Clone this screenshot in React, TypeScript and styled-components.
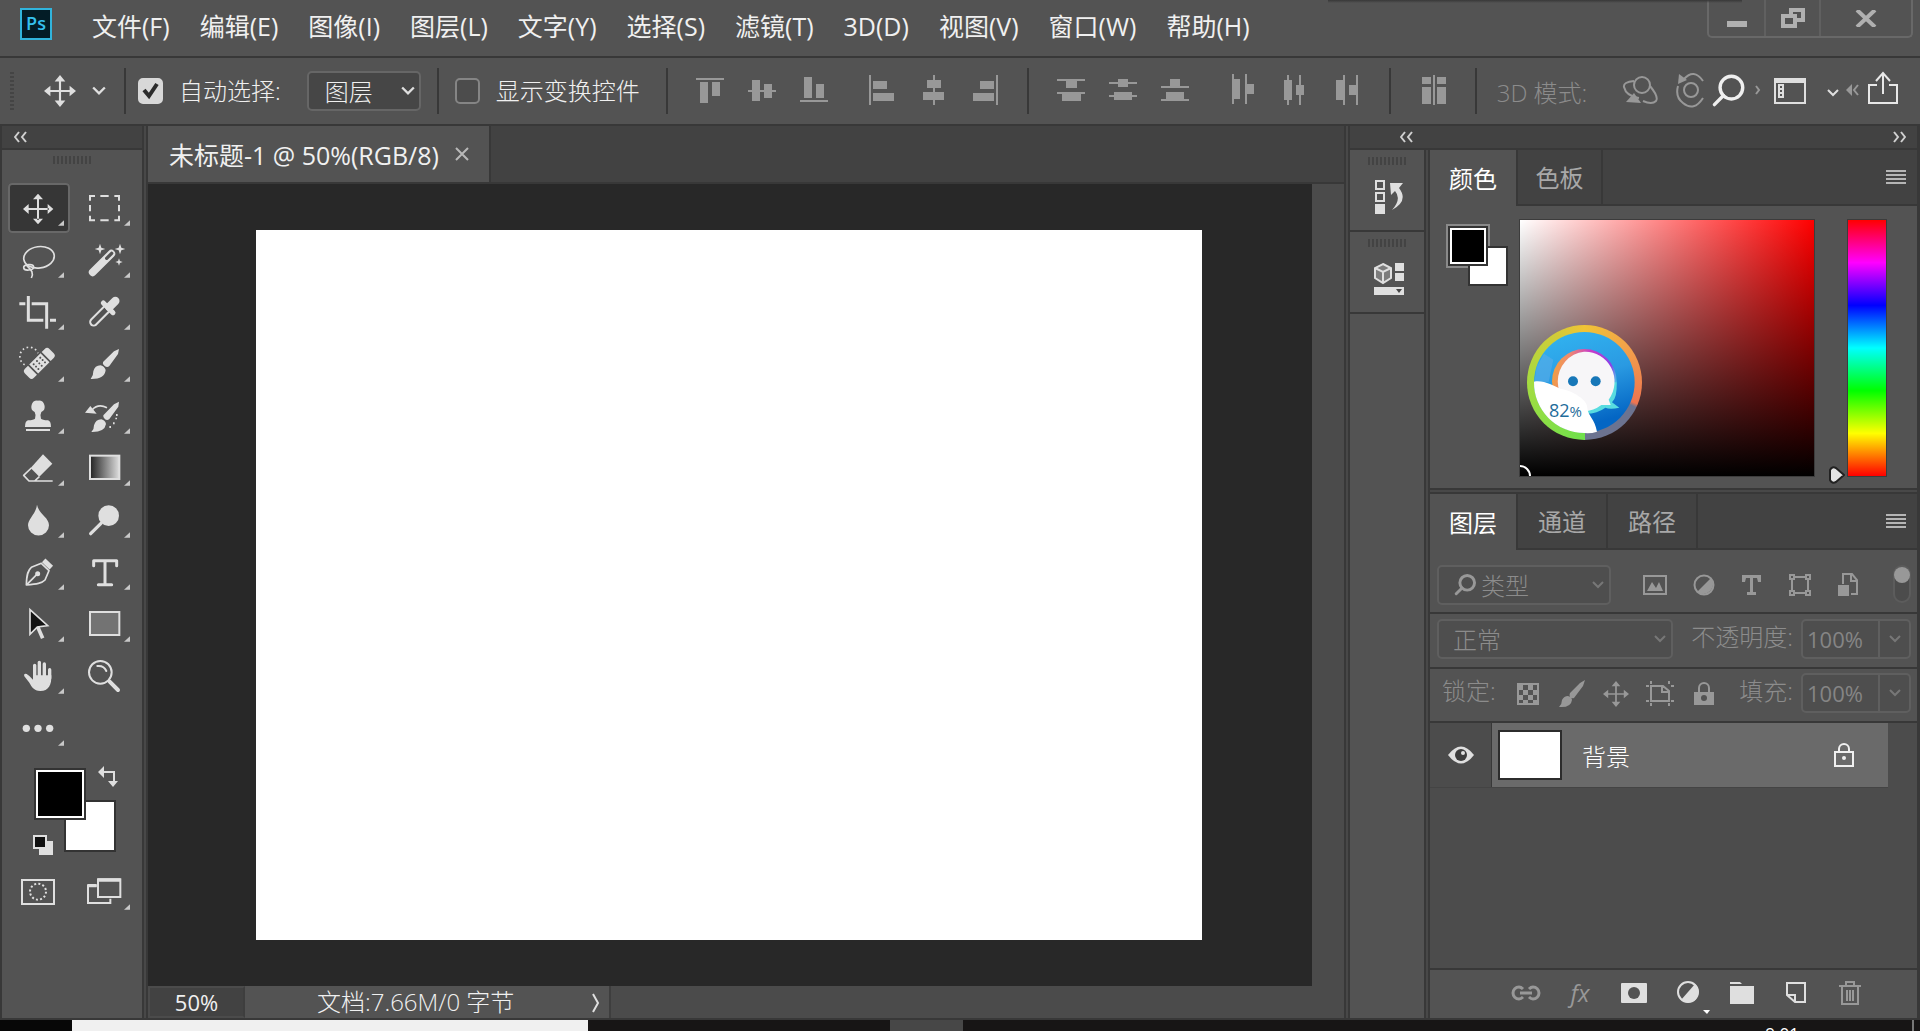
import React from "react";
import styled, { createGlobalStyle } from "styled-components";

const c = {
  panel: "#535353",
  dark: "#424242",
  line: "#383838",
  seam: "#484848",
  canvas: "#282828",
  field: "#464646",
  icon: "#dfdfdf",
  dim: "#989898",
  faint: "#8c8c8c",
  text: "#f0f0f0",
};

const Global = createGlobalStyle`
  *, *::before, *::after { box-sizing: border-box; }
  body { margin: 0; background: ${c.line}; }
  body, button, input, select {
    font-family: "Open Sans", "Noto Sans CJK SC", sans-serif;
    color: ${c.text};
  }
  svg { display: block; flex: none; }
`;

const App = styled.div`
  display: flex;
  flex-direction: column;
  height: 100vh;
  overflow: hidden;
  background: ${c.panel};
`;

const PlainButton = styled.button`
  display: flex;
  align-items: center;
  justify-content: center;
  padding: 0;
  border: 0;
  background: none;
`;

/* ---------- menu bar ---------- */

const MenuBar = styled.header`
  position: relative;
  display: flex;
  flex: none;
  align-items: flex-start;
  height: 58px;
  padding: 0 7px 0 20px;
  border-bottom: 2px solid ${c.line};
`;

const EdgeShadow = styled.div`
  position: absolute;
  top: 0;
  right: 178px;
  width: 414px;
  height: 3px;
  background: linear-gradient(#383838, transparent);
`;

const Logo = styled.div`
  width: 32px;
  height: 32px;
  margin: 8px 25px 0 0;
  border: 2px solid #31b4dc;
  background: #031c26;
  color: #35c0ee;
  font-size: 18px;
  font-weight: 600;
  line-height: 27px;
  text-align: center;
`;

const Menus = styled.nav`
  display: flex;
  flex: 1;
`;

const MenuItem = styled.button`
  padding: 0 15px;
  border: 0;
  background: none;
  font-size: 25px;
  line-height: 52px;
  white-space: nowrap;
`;

const WindowControls = styled.div`
  display: flex;
  height: 38px;
  border: 2px solid #686868;
  border-top: 0;
  border-radius: 0 0 5px 5px;
`;

const WindowButton = styled(PlainButton)<{ $wide?: boolean }>`
  width: ${(p) => (p.$wide ? 92 : 55)}px;
  & + & {
    border-left: 2px solid #606060;
  }
`;

/* ---------- options bar ---------- */

const OptionsBar = styled.section`
  display: flex;
  flex: none;
  align-items: center;
  height: 68px;
  padding: 0 17px 0 10px;
  border-bottom: 2px solid ${c.line};
`;

const SideGrip = styled.div`
  width: 4px;
  height: 38px;
  background: repeating-linear-gradient(#444 0 2px, transparent 2px 4px);
`;

const ActiveTool = styled(PlainButton)`
  margin-left: 30px;
  gap: 16px;
`;

const Separator = styled.div<{ $tight?: boolean }>`
  flex: none;
  width: 2px;
  height: 46px;
  margin: 0 ${(p) => (p.$tight ? 12 : 16)}px 0 ${(p) => (p.$tight ? 18 : 16)}px;
  background: ${c.line};
`;

const CheckLabel = styled.label`
  display: flex;
  flex: none;
  align-items: center;
  gap: 16px;
  position: relative;
  font-size: 24px;
  font-weight: 300;
  line-height: 36px;
  white-space: nowrap;
`;

const CheckBox = styled.input`
  appearance: none;
  width: 25px;
  height: 26px;
  margin: 0;
  border: 2px solid #858585;
  border-radius: 5px;
  background: #4c4c4c;
  &:checked {
    border-color: #d8d8d8;
    background: #d8d8d8;
  }
`;

const CheckMark = styled.svg`
  position: absolute;
  left: 4px;
  pointer-events: none;
`;

const SelectBox = styled.div<{ $width: number; $dim?: boolean }>`
  display: flex;
  align-items: center;
  position: relative;
  flex: none;
  width: ${(p) => p.$width}px;
  color: ${(p) => (p.$dim ? c.faint : c.text)};
`;

const Select = styled.select<{ $indent: number; $dim?: boolean }>`
  appearance: none;
  width: 100%;
  height: 40px;
  padding: 0 32px 0 ${(p) => p.$indent}px;
  border: 2px solid ${(p) => (p.$dim ? "#5f5f5f" : "#666")};
  border-radius: 5px;
  background: ${(p) => (p.$dim ? "#4e4e4e" : c.field)};
  color: inherit;
  font-size: 24px;
  font-weight: 300;
  opacity: 1;
`;

const Overlay = styled.span<{ $left?: number; $right?: number }>`
  position: absolute;
  ${(p) => (p.$left !== undefined ? `left: ${p.$left}px;` : "")}
  ${(p) => (p.$right !== undefined ? `right: ${p.$right}px;` : "")}
  pointer-events: none;
`;

const Spacer = styled.div<{ $w: number }>`
  flex: 0 1 ${(p) => p.$w}px;
`;

const IconGroup = styled.div`
  display: flex;
  flex: none;
`;

const AlignButton = styled(PlainButton)`
  width: 52px;
  color: ${c.dim};
`;

const ModeLabel = styled.span`
  margin: 0 34px 0 4px;
  color: ${c.faint};
  font-size: 24px;
  font-weight: 300;
  white-space: nowrap;
`;

const RightTools = styled.div`
  display: flex;
  gap: 4px;
  margin-left: auto;
`;

const ModeTools = styled.div`
  display: flex;
  gap: 16px;
`;

/* ---------- workspace ---------- */

const Workspace = styled.main`
  display: flex;
  flex: 1;
  min-height: 0;
  border-bottom: 2px solid ${c.line};
  background: ${c.seam};
`;

const ToolPanel = styled.aside`
  display: flex;
  flex-direction: column;
  flex: none;
  width: 144px;
  margin-right: 2px;
  border: solid ${c.line};
  border-width: 0 2px;
  background: ${c.panel};
`;

const DockHeader = styled.div`
  display: flex;
  flex: none;
  align-items: center;
  justify-content: space-between;
  height: 24px;
  padding: 0 11px 0 50px;
  border-bottom: 2px solid ${c.line};
  background: ${c.dark};
`;

const ToolHeader = styled(DockHeader)`
  padding: 0 12px;
`;

const Grip = styled.div`
  flex: none;
  width: 38px;
  height: 8px;
  margin: 6px auto 0;
  background: repeating-linear-gradient(90deg, #434343 0 2px, transparent 2px 4px);
`;

const ToolGrid = styled.div`
  display: grid;
  grid-template-columns: 62px 62px;
  grid-auto-rows: 50px;
  gap: 2px 4px;
  padding-left: 6px;
`;

const ToolList = styled(ToolGrid)`
  margin-top: 19px;
`;

const ToolButton = styled(PlainButton)<{ $active?: boolean }>`
  overflow: hidden;
  border-radius: 4px;
  background: ${(p) => (p.$active ? "#363636" : "transparent")};
  box-shadow: ${(p) => (p.$active ? "inset 0 0 0 2px #686868" : "none")};
`;

const SwatchArea = styled.div`
  position: relative;
  flex: none;
  height: 114px;
`;

const Chip = styled.button<{ $x: number; $y: number; $size: number; $front?: boolean }>`
  position: absolute;
  left: ${(p) => p.$x}px;
  top: ${(p) => p.$y}px;
  width: ${(p) => p.$size}px;
  height: ${(p) => p.$size}px;
  padding: 0;
  border: 2px solid #333;
  background: ${(p) => (p.$front ? "#000" : "#fff")};
  box-shadow: ${(p) => (p.$front ? "inset 0 0 0 2px #fff" : "none")};
`;

const ChipTool = styled(PlainButton)<{ $x: number; $y: number }>`
  position: absolute;
  left: ${(p) => p.$x}px;
  top: ${(p) => p.$y}px;
`;

const Doc = styled.section`
  display: flex;
  flex: 1;
  flex-direction: column;
  min-width: 0;
  border: solid ${c.line};
  border-width: 0 2px;
`;

const TabStrip = styled.div`
  display: flex;
  flex: none;
  height: 58px;
  border-bottom: 2px solid ${c.line};
  background: ${c.dark};
`;

const DocTab = styled.div`
  display: flex;
  align-items: center;
  gap: 16px;
  padding: 0 20px 0 21px;
  border-right: 2px solid ${c.line};
  background: ${c.panel};
  font-size: 25px;
  white-space: nowrap;
`;

const Stage = styled.div`
  display: flex;
  flex: 1;
  min-height: 0;
`;

const Pasteboard = styled.div`
  flex: 1;
  padding: 46px 110px 46px 108px;
  background: ${c.canvas};
`;

const Artboard = styled.div`
  height: 100%;
  background: #fff;
`;

const ScrollTrack = styled.div`
  width: 32px;
  background: #4b4b4b;
`;

const StatusBar = styled.footer`
  display: flex;
  flex: none;
  height: 32px;
  background: #4b4b4b;
`;

const ZoomField = styled.input`
  width: 97px;
  padding: 0;
  border: 2px solid #4b4b4b;
  border-right-color: #3e3e3e;
  background: ${c.dark};
  font-size: 22px;
  text-align: center;
`;

const DocInfo = styled.div`
  display: flex;
  align-items: center;
  justify-content: space-between;
  width: 366px;
  padding: 0 9px 0 72px;
  border-right: 2px solid #3e3e3e;
  background: ${c.panel};
  font-size: 24px;
  font-weight: 300;
  line-height: 30px;
  white-space: nowrap;
`;

/* ---------- dock ---------- */

const Dock = styled.aside`
  display: flex;
  flex: none;
  flex-direction: column;
  width: 572px;
  margin-left: 2px;
  border: solid ${c.line};
  border-width: 0 3px 0 2px;
`;

const DockBody = styled.div`
  display: flex;
  flex: 1;
  min-height: 0;
`;

const IconColumn = styled.div`
  width: 76px;
  border-right: 2px solid ${c.line};
  background: ${c.panel};
`;

const IconPanel = styled.div`
  height: 82px;
  padding-top: 1px;
  border-bottom: 2px solid ${c.line};
`;

const CollapsedButton = styled(PlainButton)`
  width: 100%;
  height: 36px;
  margin-top: 14px;
  padding-left: 4px;
`;

const Panels = styled.div`
  display: flex;
  flex: 1;
  flex-direction: column;
  gap: 2px;
  margin-left: 2px;
  border-left: 2px solid ${c.line};
`;

const Panel = styled.section<{ $fill?: boolean }>`
  display: flex;
  flex-direction: column;
  flex: ${(p) => (p.$fill ? "1" : "none")};
  border-bottom: ${(p) => (p.$fill ? "0" : `2px solid ${c.line}`)};
  border-top: ${(p) => (p.$fill ? `2px solid ${c.line}` : "0")};
  background: ${c.panel};
`;

const PanelTabs = styled.div`
  display: flex;
  flex: none;
  height: 56px;
`;

const PanelTab = styled.button<{ $active?: boolean; $width: number }>`
  width: ${(p) => p.$width}px;
  padding: 0 0 2px;
  border: solid ${c.line};
  border-width: ${(p) => (p.$active ? "0 2px 0 0" : "0 2px 2px 0")};
  background: ${(p) => (p.$active ? c.panel : c.dark)};
  color: ${(p) => (p.$active ? "#fff" : "#a8a8a8")};
  font-size: 24px;
`;

const TabFill = styled.div`
  display: flex;
  flex: 1;
  align-items: center;
  justify-content: flex-end;
  padding-right: 11px;
  border-bottom: 2px solid ${c.line};
  background: ${c.dark};
`;

const ColorBody = styled.div`
  display: flex;
  padding: 14px 31px 12px 16px;
`;

const ColorChips = styled.div`
  position: relative;
  width: 74px;
`;

const FrontFrame = styled.div`
  position: absolute;
  left: 0;
  top: 4px;
  width: 44px;
  height: 44px;
  background: #8a8a8a;
`;

const ColorField = styled.div`
  position: relative;
  flex: 1;
  height: 256px;
  overflow: hidden;
  outline: 1px solid #3c3c3c;
  background: linear-gradient(transparent, #000), linear-gradient(90deg, #fff, #f00);
`;

const Picker = styled.span`
  position: absolute;
  left: -11px;
  bottom: -11px;
  width: 22px;
  height: 22px;
  border: 2px solid #fff;
  border-radius: 50%;
`;

const Orb = styled.div`
  position: absolute;
  left: 7px;
  top: 105px;
  width: 115px;
  height: 115px;
  border-radius: 50%;
  background: conic-gradient(#f0c436, #f2a24a 50deg, #ee7450 112deg, #6c7390 116deg, #6c7390 180deg, #6fe04c 180deg, #a5dc40 270deg, #d2cb38 330deg, #f0c436);
`;

const OrbText = styled.span`
  position: absolute;
  left: 22px;
  top: 73px;
  color: #1f6d9b;
  font-size: 18px;
  line-height: 24px;
  small {
    font-size: 15px;
  }
`;

const HueBar = styled.div`
  position: relative;
  width: 38px;
  margin-left: 34px;
  outline: 1px solid #3c3c3c;
  background: linear-gradient(#f00, #f0f, #00f, #0ff, #0f0, #ff0, #f00);
`;

const HueHandle = styled.svg`
  position: absolute;
  left: -20px;
  bottom: -8px;
`;

const LayerRow = styled.div<{ $top: number; $h: number }>`
  display: flex;
  flex: none;
  align-items: flex-start;
  height: ${(p) => p.$h}px;
  padding: ${(p) => p.$top}px 6px 0 7px;
  border-bottom: 2px solid ${c.line};
`;

const FilterIcons = styled.div`
  display: flex;
  flex: 1;
  align-items: center;
  justify-content: space-between;
  height: 40px;
  padding: 0 35px 0 32px;
  color: ${c.dim};
`;

const Toggle = styled.button`
  width: 18px;
  height: 38px;
  padding: 0;
  border: 2px solid #5c5c5c;
  border-radius: 9px;
  background: #4c4c4c;
`;

const Knob = styled.span`
  display: block;
  width: 16px;
  height: 16px;
  margin: -17px 0 0 -1px;
  border-radius: 50%;
  background: ${c.dim};
`;

const FieldLabel = styled.label<{ $lead?: boolean }>`
  padding: 0 ${(p) => (p.$lead ? 10 : 8)}px 0 ${(p) => (p.$lead ? 5 : 0)}px;
  color: ${c.faint};
  font-size: 24px;
  font-weight: 300;
  line-height: 36px;
  white-space: nowrap;
`;

const Push = styled.div`
  display: flex;
  margin-left: auto;
`;

const ValueField = styled.div`
  display: flex;
  width: 110px;
  height: 40px;
  border: 2px solid #5f5f5f;
  border-radius: 5px;
  background: #4e4e4e;
`;

const ValueInput = styled.input`
  width: 77px;
  padding: 0 0 0 4px;
  border: 0;
  border-right: 2px solid #5f5f5f;
  background: none;
  color: #858585;
  font-size: 22px;
`;

const ValueDrop = styled(PlainButton)`
  flex: 1;
`;

const LockIcons = styled.div`
  display: flex;
  align-items: center;
  height: 42px;
`;

const LockButton = styled(PlainButton)`
  width: 44px;
  color: ${c.dim};
`;

const LayerList = styled.div`
  flex: 1;
  background: #4c4c4c;
`;

const Layer = styled.div`
  display: flex;
  height: 65px;
  margin-right: 29px;
  border-bottom: 1px solid #444;
`;

const EyeButton = styled(PlainButton)`
  width: 62px;
  border-right: 1px solid ${c.line};
`;

const LayerBody = styled.div`
  display: flex;
  flex: 1;
  align-items: center;
  padding: 0 33px 0 6px;
  background: #6a6a6a;
`;

const Thumb = styled.div`
  width: 64px;
  height: 50px;
  border: 2px solid #2c2c2c;
  background: #fff;
`;

const LayerName = styled.span`
  flex: 1;
  padding-left: 20px;
  color: #fff;
  font-size: 24px;
  font-weight: 300;
`;

const LayerFooter = styled.div`
  display: flex;
  flex: none;
  justify-content: flex-end;
  height: 50px;
  padding: 0 40px 2px 0;
  border-top: 2px solid ${c.line};
`;

const FooterButton = styled(PlainButton)`
  width: 54px;
`;

const FxText = styled.span`
  color: ${c.dim};
  font-size: 24px;
  font-style: italic;
  line-height: 30px;
`;

/* ---------- system taskbar ---------- */

const Taskbar = styled.footer`
  display: flex;
  flex: none;
  height: 11px;
  overflow: hidden;
  background: #171515;
`;

const TaskStart = styled.div`
  width: 72px;
  background: #070707;
`;

const TaskSearch = styled.div`
  width: 516px;
  margin-right: 302px;
  background: #f0f0f0;
`;

const TaskApp = styled.div`
  width: 73px;
  background: #474747;
`;

const Clock = styled.time`
  margin-left: auto;
  padding: 3px 113px 0 0;
  color: #fff;
  font-size: 17px;
  line-height: 22px;
`;

const DesktopEdge = styled.div`
  width: 2px;
  margin-right: 6px;
  background: #777;
`;

/* ---------- icons ---------- */

const Chevron = ({ color = c.icon, size = 12 }: { color?: string; size?: number }) => (
  <svg width={size} height={size} viewBox="0 0 12 12" fill="none" stroke={color} strokeWidth="2">
    <path d="M1 3l5 5 5-5" />
  </svg>
);

const DoubleArrow = ({ right }: { right?: boolean }) => (
  <svg width="13" height="12" viewBox="0 0 13 12" fill="none" stroke="#d0d0d0" strokeWidth="2">
    <path d={right ? "M1 1l4 5-4 5M8 1l4 5-4 5" : "M5 1L1 6l4 5M12 1L8 6l4 5"} />
  </svg>
);

const Hamburger = () => (
  <svg width="20" height="14" viewBox="0 0 20 14" fill="#b5b5b5">
    <path d="M0 0h20v2H0zM0 4h20v2H0zM0 8h20v2H0zM0 12h20v2H0z" />
  </svg>
);

const MoveIcon = ({ size = 30, color = c.icon }: { size?: number; color?: string }) => (
  <svg width={size} height={size} viewBox="0 0 30 30" fill={color}>
    <path d="M14 5h2v9h9v2h-9v9h-2v-9H5v-2h9z" />
    <path d="M15 0l5 6H10zM15 30l5-6H10zM0 15l6-5v10zM30 15l-6-5v10z" />
  </svg>
);

const alignIcons: [string, string][] = [
  ["顶对齐", "M4 7h28v2H4zM8 11h8v21H8zM20 11h8v14h-8z"],
  ["垂直居中对齐", "M4 19h28v2H4zM8 9h8v21H8zM20 13h8v14h-8z"],
  ["底对齐", "M4 29h28v2H4zM8 6h8v21H8zM20 13h8v14h-8z"],
  ["左对齐", "M6 4h2v30H6zM10 10h14v8H10zM10 22h21v8H10z"],
  ["水平居中对齐", "M18 4h2v30h-2zM12 9h14v8H12zM8 21h21v8H8z"],
  ["右对齐", "M29 4h2v30h-2zM13 10h14v8H13zM6 22h21v8H6z"],
  ["按顶分布", "M4 8h28v2H4zM13 10h11v7H13zM4 21h28v2H4zM9 23h19v7H9z"],
  ["垂直居中分布", "M4 11h28v2H4zM13 8h10v8H13zM4 24h28v2H4zM9 21h18v8H9z"],
  ["按底分布", "M13 8h10v7H13zM4 15h28v2H4zM9 21h18v7H9zM4 28h28v2H4z"],
  ["按左分布", "M7 3h2v30H7zM9 8h6v20H9zM20 3h2v30h-2zM22 13h7v10h-7z"],
  ["水平居中分布", "M10 4h2v30h-2zM7 9h8v20H7zM22 4h2v30h-2zM19 14h8v10h-8z"],
  ["按右分布", "M7 9h7v20H7zM14 4h2v30h-2zM20 14h7v10h-7zM27 4h2v30h-2z"],
  ["自动对齐图层", "M7 6h9v7H7zM7 16h9v17H7zM18 4h2v30h-2zM22 6h9v7h-9zM22 16h9v17h-9z"],
];

const Aligns = ({ from, to }: { from: number; to: number }) => (
  <IconGroup>
    {alignIcons.slice(from, to).map(([name, d]) => (
      <AlignButton key={name} aria-label={name}>
        <svg width="36" height="40" viewBox="0 0 36 40" fill="currentColor" shapeRendering="crispEdges">
          <path d={d} />
        </svg>
      </AlignButton>
    ))}
  </IconGroup>
);

const star = (x: number, y: number, r: number) =>
  `M${x} ${y - r}L${x + r / 4} ${y - r / 4}L${x + r} ${y}L${x + r / 4} ${y + r / 4}L${x} ${y + r}L${x - r / 4} ${y + r / 4}L${x - r} ${y}L${x - r / 4} ${y - r / 4}Z`;

interface Tool {
  name: string;
  top: number;
  right?: boolean;
  art: React.ReactNode;
  noMenu?: boolean;
  active?: boolean;
}

const ink = c.icon;

const tools: Tool[] = [
  {
    name: "移动工具", top: 39, active: true,
    art: (
      <path fill={ink} d="M111 85h6v29h29v6h-29v29h-6v-29H82v-6h29zM114 71l15 17H99zM114 163l15-17H99zM69 117l17-15v30zM160 117l-17-15v30z" />
    ),
  },
  {
    name: "矩形选框工具", top: 39, right: true,
    art: (
      <path fill="none" stroke={ink} strokeWidth="6" d="M270 92V78H285M301 78H326M343 78H357V92M357 105V124M357 137V151H343M326 151H301M285 151H270V137M270 124V105" />
    ),
  },
  {
    name: "套索工具", top: 195,
    art: (
      <g fill="none" stroke={ink} strokeWidth="5">
        <ellipse cx="117" cy="262" rx="46" ry="32" transform="rotate(-8 117 262)" />
        <ellipse cx="86" cy="292" rx="15" ry="8" transform="rotate(-6 86 292)" />
        <path d="M78 284C88 296 104 304 94 324" />
      </g>
    ),
  },
  {
    name: "魔棒工具", top: 195, right: true,
    art: (
      <g fill="none" strokeLinecap="round">
        <path d="M278 307L334 251" stroke={ink} strokeWidth="23" />
        <path d="M320 265L335 250" stroke={c.panel} strokeWidth="10" />
        <path fill={ink} d={star(300, 237, 16) + star(360, 237, 16) + star(357, 276, 11)} />
      </g>
    ),
  },
  {
    name: "裁剪工具", top: 351,
    art: <path fill="none" stroke={ink} strokeWidth="9" d="M58 401H76M85 378V451H130M95 401H140V476M150 451H168" />,
  },
  {
    name: "吸管工具", top: 351, right: true,
    art: (
      <g fill="none" strokeLinecap="round">
        <path d="M320 417L281 456" stroke={ink} strokeWidth="27" />
        <path d="M322 415L281 456" stroke={c.panel} strokeWidth="15" />
        <path d="M346 393L328 411" stroke={ink} strokeWidth="25" />
        <path d="M310 399L339 428" stroke={ink} strokeWidth="15" />
      </g>
    ),
  },
  {
    name: "污点修复画笔工具", top: 507,
    art: (
      <g>
        <g transform="rotate(-45 118 580)" fill={ink}>
          <path d="M76 561h13v38H76q-10 0-10-10v-18q0-10 10-10zM94 561h48v38H94zM147 561h13q10 0 10 10v18q0 10-10 10h-13z" />
          <g fill={c.panel}>
            {[104, 118, 132].map((x) => [570, 580, 590].map((y) => <circle key={`${x}${y}`} cx={x} cy={y} r="3" />))}
          </g>
        </g>
        <path d="M74 584A28 28 0 1 1 114 550" fill="none" stroke={ink} strokeWidth="5" strokeDasharray="5 8" />
      </g>
    ),
  },
  {
    name: "画笔工具", top: 507, right: true,
    art: (
      <path fill={ink} d="M357 537L354 552L328 588Q322 594 314 588Q306 582 309 576L342 544ZM302 586Q314 590 317 600Q314 628 272 627Q281 615 280 604Q284 586 302 586Z" />
    ),
  },
  {
    name: "仿制图章工具", top: 663,
    art: (
      <path fill={ink} d="M114 692a18 18 0 0 1 10 34Q119 735 123 746Q126 750 144 751Q153 753 153 771H75Q75 753 84 751Q102 750 105 746Q109 735 104 726A18 18 0 0 1 114 692ZM78 777h72v6H78z" />
    ),
  },
  {
    name: "历史记录画笔工具", top: 663, right: true,
    art: (
      <g fill={ink}>
        <path d="M357 695L355 710L328 747Q322 753 315 748Q308 742 310 736L342 703ZM304 748Q316 751 318 762Q314 787 274 786Q283 776 282 766Q287 748 304 748ZM255 728L271 708L290 731Z" />
        <path d="M276 720Q294 700 321 713" fill="none" stroke={ink} strokeWidth="5" />
        <path d="M348 732v6h5v-6zM346 743v5h5v-5zM339 757v6h5v-6zM328 768v6h5v-6z" />
      </g>
    ),
  },
  {
    name: "橡皮擦工具", top: 819,
    art: (
      <g transform="translate(0 810)">
        <path fill={ink} d="M129 43L157 71L118 110L92 84Z" />
        <path fill="none" stroke={ink} strokeWidth="5" strokeLinejoin="round" d="M94 84L71 106L87 123H158M118 110L104 123" />
      </g>
    ),
  },
  {
    name: "渐变工具", top: 819, right: true,
    art: (
      <g transform="translate(0 810)">
        <linearGradient id="ramp">
          <stop offset="0" stopColor="#222" />
          <stop offset="1" stopColor="#ddd" />
        </linearGradient>
        <rect x="270" y="47" width="88" height="70" fill="url(#ramp)" stroke={ink} strokeWidth="6" />
      </g>
    ),
  },
  {
    name: "模糊工具", top: 975,
    art: <path transform="translate(0 810)" fill={ink} d="M111 194C116 222 147 232 147 256A31 30 0 0 1 84 256C84 236 108 222 111 194Z" />,
  },
  {
    name: "减淡工具", top: 975, right: true,
    art: (
      <g transform="translate(0 810)">
        <circle cx="326" cy="227" r="31" fill={ink} />
        <path d="M303 250L272 281" stroke={ink} strokeWidth="10" strokeLinecap="round" />
      </g>
    ),
  },
  {
    name: "钢笔工具", top: 1131,
    art: (
      <g transform="translate(0 810)" fill="none" stroke={ink} strokeWidth="5" strokeLinejoin="round">
        <path d="M79 435C80 402 84 390 94 382L124 370L147 392L135 420C126 430 110 432 79 435Z" />
        <path d="M81 433L110 404" />
        <circle cx="113" cy="401" r="5" fill={ink} />
        <path d="M131 361L154 383" strokeWidth="15" />
      </g>
    ),
  },
  {
    name: "横排文字工具", top: 1131, right: true,
    art: <path transform="translate(0 810)" fill="none" stroke={ink} strokeWidth="9" strokeLinejoin="round" strokeLinecap="round" d="M281 377V362H350V377M315 362V433M295 434H335" />,
  },
  {
    name: "路径选择工具", top: 1287,
    art: (
      <g transform="translate(0 810)">
        <path d="M113 560L128 595" stroke={ink} strokeWidth="11" />
        <path d="M90 509L143 557L112 561L90 583Z" fill="#141414" stroke={ink} strokeWidth="5" />
      </g>
    ),
  },
  {
    name: "矩形工具", top: 1287, right: true,
    art: <rect x="270" y="1326" width="88" height="69" fill="#737373" stroke={ink} strokeWidth="6" />,
  },
  {
    name: "抓手工具", top: 1443,
    art: (
      <g transform="translate(0 810)" stroke={ink} strokeLinecap="round" strokeWidth="10">
        <path d="M104 676V715M118 667V715M133 672V715M149 689V715" />
        <path strokeWidth="0" fill={ink} d="M99 706H154C155 736 146 753 121 753C101 753 95 740 87 727L73 709Q70 699 80 702Q90 708 99 719Z" />
      </g>
    ),
  },
  {
    name: "缩放工具", top: 1443, right: true, noMenu: true,
    art: (
      <g transform="translate(0 810)" fill="none" stroke={ink} strokeLinecap="round">
        <circle cx="301" cy="697" r="34" strokeWidth="6" />
        <path d="M292 678Q312 676 319 693" strokeWidth="6" />
        <path d="M329 725L354 750" strokeWidth="12" />
      </g>
    ),
  },
  {
    name: "编辑工具栏", top: 1599,
    art: (
      <g fill={ink}>
        <circle cx="79" cy="1675" r="11" />
        <circle cx="114" cy="1675" r="11" />
        <circle cx="149" cy="1675" r="11" />
      </g>
    ),
  },
];

const modeTools: Tool[] = [
  {
    name: "以快速蒙版模式编辑", top: 381, noMenu: true,
    art: (
      <g fill="none" stroke={ink} strokeWidth="6">
        <rect x="66" y="420" width="96" height="72" />
        <circle cx="114" cy="455" r="24" strokeDasharray="6 6.6" />
      </g>
    ),
  },
  {
    name: "更改屏幕模式", top: 381, right: true,
    art: (
      <g fill="none" stroke={ink} strokeWidth="6">
        <path d="M290 437H264V489H331V476" />
        <path d="M262 437h28" strokeWidth="10" />
        <rect x="294" y="418" width="67" height="53" />
        <path d="M293 420h69" strokeWidth="10" />
      </g>
    ),
  },
];

const ToolItem = ({ tool }: { tool: Tool }) => {
  const x = tool.right ? 222 : 24;
  return (
    <ToolButton aria-label={tool.name} $active={tool.active}>
      <svg width="62" height="50" viewBox={`${x} ${tool.top} 186 150`}>
        {tool.art}
        {!tool.noMenu && <path fill="#c8c8c8" d={`M${x + 168} ${tool.top + 112}v16h-18z`} />}
      </svg>
    </ToolButton>
  );
};

const OrbArt = () => (
  <svg width="115" height="115" viewBox="81 44 345 345">
    <defs>
      <linearGradient id="orbBlue" x1="0" y1="0" x2="0.3" y2="1">
        <stop offset="0" stopColor="#32b6f2" />
        <stop offset="0.55" stopColor="#2a9ae2" />
        <stop offset="1" stopColor="#0466c4" />
      </linearGradient>
      <linearGradient id="orbRim" x1="0" y1="0.4" x2="1" y2="0.6">
        <stop offset="0" stopColor="#f0a040" />
        <stop offset="0.2" stopColor="#f08a70" />
        <stop offset="0.5" stopColor="#c83cc8" />
        <stop offset="0.85" stopColor="#8a40e8" />
        <stop offset="1" stopColor="#40d8e8" />
      </linearGradient>
    </defs>
    <circle cx="253" cy="216" r="151" fill="url(#orbBlue)" />
    <path d="M110 170L132 130L160 148L146 215L103 214Z" fill="#5aaee8" opacity="0.6" />
    <circle cx="253" cy="213" r="97" fill="url(#orbRim)" />
    <path d="M350 216Q352 262 336 276L358 292Q330 298 316 292Q292 310 258 310L270 270L340 216Z" fill="#58dce0" />
    <path d="M252 124A88 90 0 0 1 326 268L332 284L304 284A92 92 0 0 1 252 303A88 90 0 0 1 252 124Z" fill="#f7f6f8" />
    <circle cx="219" cy="213" r="15" fill="#1777b8" />
    <circle cx="287" cy="213" r="15" fill="#1777b8" />
    <path d="M102 214C130 208 160 226 182 236C215 240 264 268 262 294C264 316 284 326 291 364Q272 370 253 368A151 151 0 0 1 102 214Z" fill="#fff" />
  </svg>
);

const Half = ({ color }: { color: string }) => (
  <svg width="22" height="22" viewBox="0 0 22 22">
    <circle cx="11" cy="11" r="9.5" fill="none" stroke={color} strokeWidth="2" />
    <path d="M18 4A10 10 0 0 1 4 18Z" fill={color} />
  </svg>
);

const Search = ({ size, color, w }: { size: number; color: string; w: number }) => (
  <svg width={size} height={size} viewBox="0 0 30 30" fill="none" stroke={color} strokeWidth={w} strokeLinecap="round">
    <circle cx="18" cy="12" r="10" />
    <path d="M11 19L3 27" />
  </svg>
);

const BrushSmall = () => (
  <svg width="28" height="28" viewBox="0 0 28 28" fill="currentColor">
    <path d="M27 0L25 6L16 18Q14 19 12 17Q11 15 12 13L22 3ZM10 16Q14 17 14 20Q13 28 1 27Q4 24 4 20Q6 16 10 16Z" />
  </svg>
);

const menus = ["文件(F)", "编辑(E)", "图像(I)", "图层(L)", "文字(Y)", "选择(S)", "滤镜(T)", "3D(D)", "视图(V)", "窗口(W)", "帮助(H)"];

export default function Photoshop() {
  return (
    <App>
      <Global />
      <MenuBar>
        <EdgeShadow />
        <Logo>Ps</Logo>
        <Menus>
          {menus.map((m) => (
            <MenuItem key={m}>{m}</MenuItem>
          ))}
        </Menus>
        <WindowControls>
          <WindowButton aria-label="最小化">
            <svg width="20" height="24" viewBox="0 0 20 24" fill="#b0b0b0"><path d="M0 15h20v6H0z" /></svg>
          </WindowButton>
          <WindowButton aria-label="还原">
            <svg width="24" height="20" viewBox="0 0 24 20" fill="none" stroke="#b0b0b0" strokeWidth="4">
              <path d="M10 7V2h12v10h-6M2 8h12v10H2z" />
            </svg>
          </WindowButton>
          <WindowButton aria-label="关闭" $wide>
            <svg width="22" height="17" viewBox="0 0 22 17" fill="none" stroke="#b0b0b0" strokeWidth="4">
              <path d="M2 0l18 17M20 0L2 17" />
            </svg>
          </WindowButton>
        </WindowControls>
      </MenuBar>

      <OptionsBar>
        <SideGrip />
        <ActiveTool aria-label="移动工具">
          <MoveIcon size={32} />
          <Chevron size={14} />
        </ActiveTool>
        <Separator $tight />
        <CheckLabel>
          <CheckBox type="checkbox" defaultChecked />
          <CheckMark width="18" height="18" viewBox="0 0 18 18" fill="none" stroke="#2c2c2c" strokeWidth="4">
            <path d="M2 8l5 6 8-12" />
          </CheckMark>
          自动选择:
        </CheckLabel>
        <Spacer $w={26} />
        <SelectBox $width={114}>
          <Select $indent={16} aria-label="自动选择">
            <option>图层</option>
          </Select>
          <Overlay $right={6}><Chevron size={14} /></Overlay>
        </SelectBox>
        <Separator />
        <CheckLabel>
          <CheckBox type="checkbox" />
          显示变换控件
        </CheckLabel>
        <Spacer $w={10} />
        <Separator />
        <Aligns from={0} to={3} />
        <Spacer $w={15} />
        <Aligns from={3} to={6} />
        <Separator />
        <Aligns from={6} to={9} />
        <Spacer $w={16} />
        <Aligns from={9} to={12} />
        <Separator />
        <Aligns from={12} to={13} />
        <Separator />
        <ModeLabel>3D 模式:</ModeLabel>
        <ModeTools>
          <PlainButton aria-label="环绕移动 3D 相机">
            <svg width="38" height="40" viewBox="0 0 38 40" fill="none" stroke={c.dim} strokeWidth="2">
              <circle cx="21" cy="14" r="8" />
              <path d="M13 10Q2 11 3 16Q5 25 18 27M29 15Q38 26 35 30Q31 34 22 30" />
              <path d="M5 31l8-9 7 10z" fill={c.dim} stroke="none" />
            </svg>
          </PlainButton>
          <PlainButton aria-label="滚动 3D 相机">
            <svg width="30" height="40" viewBox="0 0 30 40" fill="none" stroke={c.dim} strokeWidth="2">
              <circle cx="16" cy="19" r="7" />
              <path d="M9 8Q19 -3 28 10M3 15Q0 26 8 32Q19 41 28 27" />
              <path d="M4 3l8 6-9 4z" fill={c.dim} stroke="none" />
            </svg>
          </PlainButton>
        </ModeTools>
        <RightTools>
          <PlainButton aria-label="搜索"><Search size={34} color="#efefef" w={3} /></PlainButton>
          <svg width="18" height="40" viewBox="0 0 18 40" fill="none" stroke={c.dim} strokeWidth="2"><path d="M7 15l3 4-3 4" /></svg>
          <PlainButton aria-label="工作区">
            <svg width="38" height="40" viewBox="0 0 38 40" fill={c.icon}>
              <path fillRule="evenodd" d="M3 7h32v26H3zM5 12v19h28V12zM7 13h6v14H7zM9 15v2h2v-2zM9 19v2h2v-2zM9 23v2h2v-2z" />
            </svg>
            <svg width="32" height="40" viewBox="0 0 32 40" fill="none" stroke={c.icon} strokeWidth="2"><path d="M19 19l5 5 5-5" /></svg>
          </PlainButton>
          <svg width="14" height="40" viewBox="0 0 14 40" fill={c.dim}><path d="M7 13v12L1 19z" /><path d="M13 14l-4 5 4 5" fill="none" stroke={c.dim} strokeWidth="2" /></svg>
          <PlainButton aria-label="共享">
            <svg width="40" height="40" viewBox="0 0 40 40" fill="none" stroke="#e8e8e8" strokeWidth="2">
              <path d="M14 14H6v18h28V14h-8M20 23V3M13 10l7-8 7 8" />
            </svg>
          </PlainButton>
        </RightTools>
      </OptionsBar>

      <Workspace>
        <ToolPanel>
          <ToolHeader><DoubleArrow /></ToolHeader>
          <Grip />
          <ToolList>
            {tools.map((t) => (
              <ToolItem key={t.name} tool={t} />
            ))}
          </ToolList>
          <SwatchArea>
            <Chip aria-label="背景色" $x={62} $y={47} $size={52} />
            <Chip aria-label="前景色" $x={32} $y={15} $size={52} $front />
            <ChipTool aria-label="切换前景色和背景色" $x={96} $y={13}>
              <svg width="20" height="22" viewBox="0 0 20 22" fill={ink}>
                <path d="M0 6l6-6v5h11v10h3l-5 6-5-6h5V7H6v5z" />
              </svg>
            </ChipTool>
            <ChipTool aria-label="默认前景色和背景色" $x={31} $y={82}>
              <svg width="20" height="20" viewBox="0 0 20 20">
                <path d="M6 6h14v14H6z" fill={ink} />
                <path d="M1 1h12v12H1z" fill="#111" stroke={ink} strokeWidth="2" />
              </svg>
            </ChipTool>
          </SwatchArea>
          <ToolGrid>
            {modeTools.map((t) => (
              <ToolItem key={t.name} tool={t} />
            ))}
          </ToolGrid>
        </ToolPanel>

        <Doc>
          <TabStrip>
            <DocTab>
              未标题-1 @ 50%(RGB/8)
              <PlainButton aria-label="关闭文档">
                <svg width="14" height="14" viewBox="0 0 14 14" stroke="#b8b8b8" strokeWidth="2"><path d="M1 1l12 12M13 1L1 13" /></svg>
              </PlainButton>
            </DocTab>
          </TabStrip>
          <Stage>
            <Pasteboard><Artboard /></Pasteboard>
            <ScrollTrack />
          </Stage>
          <StatusBar>
            <ZoomField aria-label="缩放比例" defaultValue="50%" />
            <DocInfo>
              文档:7.66M/0 字节
              <svg width="8" height="26" viewBox="0 0 8 26" fill="none" stroke={c.icon} strokeWidth="2"><path d="M1 5l5 9-5 9" /></svg>
            </DocInfo>
          </StatusBar>
        </Doc>

        <Dock>
          <DockHeader>
            <DoubleArrow />
            <DoubleArrow right />
          </DockHeader>
          <DockBody>
            <IconColumn>
              <IconPanel>
                <Grip />
                <CollapsedButton aria-label="历史记录">
                  <svg width="30" height="36" viewBox="0 0 30 36" fill="none" stroke={ink} strokeWidth="2">
                    <path d="M2 2h8v8H2zM2 14h8v8H2z" />
                    <path d="M1 25h10v10H1zM16 4h13l-4 5Q35 22 18 31Q28 20 21 12l-4 4z" fill={ink} stroke="none" />
                  </svg>
                </CollapsedButton>
              </IconPanel>
              <IconPanel>
                <Grip />
                <CollapsedButton aria-label="属性">
                  <svg width="32" height="36" viewBox="0 0 32 36" fill="none" stroke={ink} strokeWidth="2">
                    <path d="M10 3l8 4v10l-8 5-8-5V7z" fill="#7c7c7c" />
                    <path d="M2 7l8 4 8-4M10 11v11" />
                    <path d="M22 2h9v8h-9zM22 12h9v8h-9zM1 26h30v8H1z" fill={ink} stroke="none" />
                    <path d="M23 28h6l-3 4z" fill="#444" stroke="none" />
                  </svg>
                </CollapsedButton>
              </IconPanel>
            </IconColumn>

            <Panels>
              <Panel>
                <PanelTabs>
                  <PanelTab $active $width={88}>颜色</PanelTab>
                  <PanelTab $width={85}>色板</PanelTab>
                  <TabFill><PlainButton aria-label="颜色面板菜单"><Hamburger /></PlainButton></TabFill>
                </PanelTabs>
                <ColorBody>
                  <ColorChips>
                    <FrontFrame />
                    <Chip aria-label="背景色" $x={22} $y={26} $size={40} />
                    <Chip aria-label="前景色" $x={2} $y={6} $size={40} $front />
                  </ColorChips>
                  <ColorField>
                    <Picker />
                    <Orb>
                      <OrbArt />
                      <OrbText>82<small>%</small></OrbText>
                    </Orb>
                  </ColorField>
                  <HueBar>
                    <HueHandle width="17" height="18" viewBox="0 0 17 18">
                      <path d="M2 4Q4 0 8 2L16 9L8 16Q4 18 2 14Z" fill="#e4e4e4" stroke="#222" strokeWidth="2" />
                    </HueHandle>
                  </HueBar>
                </ColorBody>
              </Panel>

              <Panel $fill>
                <PanelTabs>
                  <PanelTab $active $width={88}>图层</PanelTab>
                  <PanelTab $width={90}>通道</PanelTab>
                  <PanelTab $width={90}>路径</PanelTab>
                  <TabFill><PlainButton aria-label="图层面板菜单"><Hamburger /></PlainButton></TabFill>
                </PanelTabs>

                <LayerRow $top={15} $h={64}>
                  <SelectBox $width={174} $dim>
                    <Select $indent={42} $dim aria-label="筛选类型">
                      <option>类型</option>
                    </Select>
                    <Overlay $left={17}><Search size={22} color={c.dim} w={4} /></Overlay>
                    <Overlay $right={7}><Chevron color="#777" /></Overlay>
                  </SelectBox>
                  <FilterIcons>
                    <svg width="24" height="20" viewBox="0 0 24 20" fill="currentColor">
                      <path d="M1 1h22v18H1z" fill="none" stroke="currentColor" strokeWidth="2" />
                      <path d="M4 16l5-9 4 6 3-6 4 9z" />
                    </svg>
                    <Half color={c.dim} />
                    <svg width="20" height="22" viewBox="0 0 20 22" fill="currentColor">
                      <path d="M0 1h19v7h-3l-1-4h-4v14h3v3H5v-3h3V4H4L3 8H0z" />
                    </svg>
                    <svg width="24" height="24" viewBox="0 0 24 24" fill="none" stroke="currentColor" strokeWidth="2">
                      <path d="M2 2h4v4H2zM18 2h4v4h-4zM2 18h4v4H2zM18 18h4v4h-4zM6 4h12M6 20h12M4 6v12M20 6v12" />
                    </svg>
                    <svg width="20" height="24" viewBox="0 0 20 24" fill="none" stroke="currentColor" strokeWidth="2">
                      <path d="M5 11V1h9l5 6v14h-6M13 1v7h6" />
                      <path d="M0 12h11v11H0z" fill="currentColor" stroke="none" />
                    </svg>
                  </FilterIcons>
                  <Toggle aria-label="打开或关闭图层过滤"><Knob /></Toggle>
                </LayerRow>

                <LayerRow $top={5} $h={55}>
                  <SelectBox $width={236} $dim>
                    <Select $indent={14} $dim aria-label="混合模式">
                      <option>正常</option>
                    </Select>
                    <Overlay $right={7}><Chevron color="#777" /></Overlay>
                  </SelectBox>
                  <Push>
                    <FieldLabel htmlFor="opacity">不透明度:</FieldLabel>
                    <ValueField>
                      <ValueInput id="opacity" defaultValue="100%" />
                      <ValueDrop aria-label="不透明度滑块"><Chevron color="#777" /></ValueDrop>
                    </ValueField>
                  </Push>
                </LayerRow>

                <LayerRow $top={4} $h={54}>
                  <FieldLabel as="span" $lead>锁定:</FieldLabel>
                  <LockIcons>
                    <LockButton aria-label="锁定透明像素">
                      <svg width="28" height="24" viewBox="0 0 28 24" fill="currentColor">
                        <path fillRule="evenodd" d="M3 1h22v22H3zM9 3v5h5V3zM19 3v5h4V3zM5 8v5h4V8zM14 8v5h5V8zM9 13v5h5v-5zM19 13v5h4v-5zM5 18v3h4v-3zM14 18v3h5v-3z" />
                      </svg>
                    </LockButton>
                    <LockButton aria-label="锁定图像像素"><BrushSmall /></LockButton>
                    <LockButton aria-label="锁定位置"><MoveIcon size={26} color={c.dim} /></LockButton>
                    <LockButton aria-label="防止在画板内外自动嵌套">
                      <svg width="40" height="26" viewBox="0 0 40 26" fill="none" stroke="currentColor" strokeWidth="2">
                        <path d="M11 5h12l6 5v10H11zM22 5v6h7M6 5h3M11 0v3M29 0v3M31 5h3M6 20h3M11 22v3M29 22v3M31 20h3" />
                      </svg>
                    </LockButton>
                    <LockButton aria-label="锁定全部">
                      <svg width="20" height="24" viewBox="0 0 20 24" fill="currentColor">
                        <path d="M5 11V6a5 5 0 0 1 10 0v5" fill="none" stroke="currentColor" strokeWidth="2" />
                        <path fillRule="evenodd" d="M0 10h20v13H0zM10 13a3 3 0 1 0 0 6 3 3 0 0 0 0-6z" />
                      </svg>
                    </LockButton>
                  </LockIcons>
                  <Push>
                    <FieldLabel htmlFor="fill">填充:</FieldLabel>
                    <ValueField>
                      <ValueInput id="fill" defaultValue="100%" />
                      <ValueDrop aria-label="填充滑块"><Chevron color="#777" /></ValueDrop>
                    </ValueField>
                  </Push>
                </LayerRow>

                <LayerList>
                  <Layer>
                    <EyeButton aria-label="指示图层可见性">
                      <svg width="26" height="18" viewBox="0 0 26 18">
                        <path d="M0 9Q13-8 26 9Q13 26 0 9Z" fill={ink} />
                        <circle cx="13" cy="9" r="6" fill="#3c3c3c" />
                        <circle cx="15" cy="7" r="2" fill={ink} />
                      </svg>
                    </EyeButton>
                    <LayerBody>
                      <Thumb />
                      <LayerName>背景</LayerName>
                      <svg width="22" height="24" viewBox="0 0 22 24" fill="none" stroke="#f0f0f0" strokeWidth="2">
                        <path d="M2 9h18v14H2zM6 9V6a5 5 0 0 1 10 0v3" />
                        <circle cx="11" cy="15" r="2" fill="#f0f0f0" stroke="none" />
                      </svg>
                    </LayerBody>
                  </Layer>
                </LayerList>

                <LayerFooter>
                  <FooterButton aria-label="链接图层">
                    <svg width="30" height="16" viewBox="0 0 30 16" fill="none" stroke={c.dim} strokeWidth="3">
                      <path d="M12 4Q10 2 8 2a6 6 0 0 0 0 12q2 0 4-2M18 4q2-2 4-2a6 6 0 0 1 0 12q-2 0-4-2M9 8h12" />
                    </svg>
                  </FooterButton>
                  <FooterButton aria-label="添加图层样式"><FxText>fx</FxText></FooterButton>
                  <FooterButton aria-label="添加图层蒙版">
                    <svg width="26" height="20" viewBox="0 0 26 20">
                      <rect width="26" height="20" rx="1" fill={ink} />
                      <circle cx="13" cy="10" r="6" fill={c.panel} />
                    </svg>
                  </FooterButton>
                  <FooterButton aria-label="创建新的填充或调整图层">
                    <svg width="54" height="46" viewBox="0 0 54 46">
                      <circle cx="27" cy="22" r="10" fill="none" stroke={ink} strokeWidth="2" />
                      <path d="M34 14A10 10 0 0 1 20 30Z" fill={ink} />
                      <path d="M42 40h7l-3 4z" fill="#fff" />
                    </svg>
                  </FooterButton>
                  <FooterButton aria-label="创建新组">
                    <svg width="24" height="22" viewBox="0 0 24 22" fill={ink}>
                      <path d="M0 0h10l2 2H0zM0 4h24v18H0z" />
                    </svg>
                  </FooterButton>
                  <FooterButton aria-label="创建新图层">
                    <svg width="20" height="22" viewBox="0 0 20 22" fill="none" stroke={ink} strokeWidth="2">
                      <path d="M1 1h18v19H9L1 13zM1 13h8v7" />
                    </svg>
                  </FooterButton>
                  <FooterButton aria-label="删除图层">
                    <svg width="22" height="25" viewBox="0 0 22 25" fill="none" stroke={c.dim} strokeWidth="2">
                      <path d="M0 5h22M7 4V1h8v3M3 6v17h16V6M8 9v11M11 9v11M14 9v11" />
                    </svg>
                  </FooterButton>
                </LayerFooter>
              </Panel>
            </Panels>
          </DockBody>
        </Dock>
      </Workspace>

      <Taskbar>
        <TaskStart />
        <TaskSearch />
        <TaskApp />
        <Clock>9:01</Clock>
        <DesktopEdge />
      </Taskbar>
    </App>
  );
}
